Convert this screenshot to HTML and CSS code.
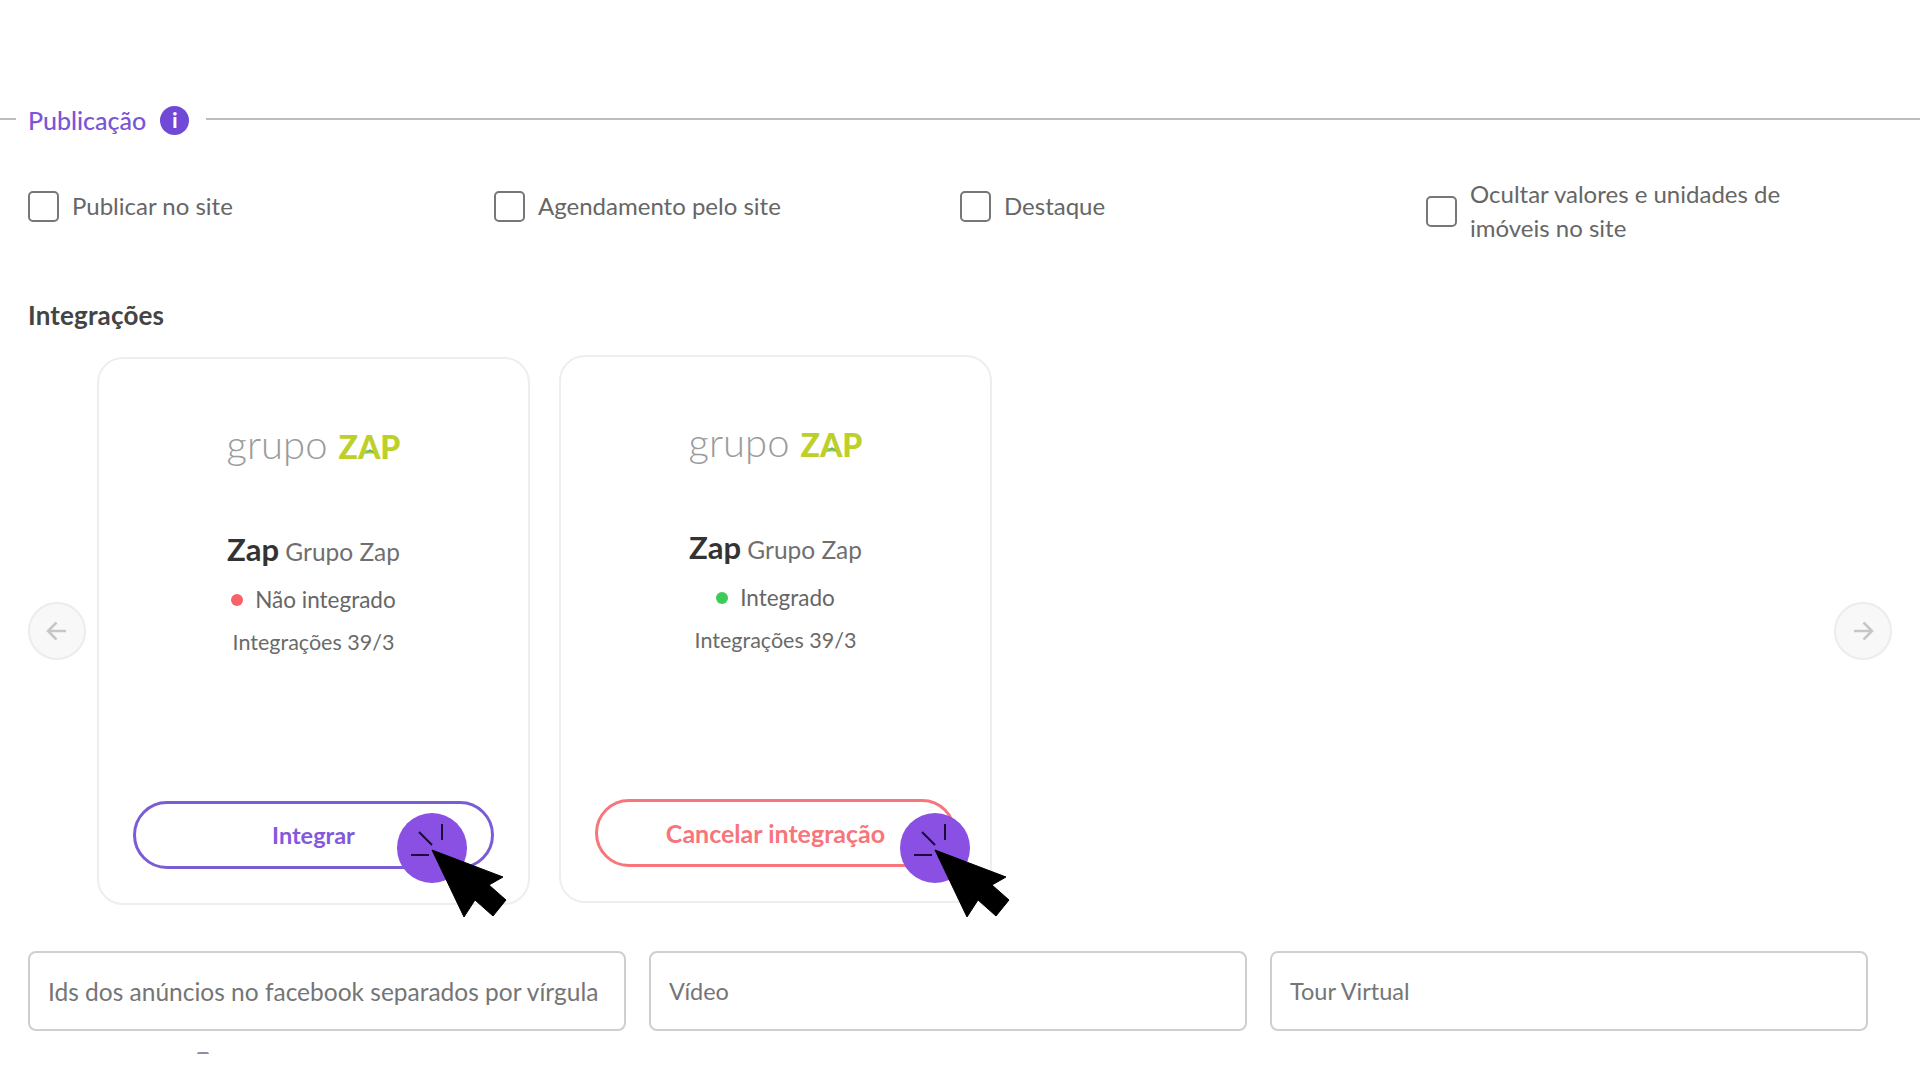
FILE: index.html
```html
<!DOCTYPE html>
<html lang="pt-BR">
<head>
<meta charset="utf-8">
<title>Publicação</title>
<link rel="stylesheet" href="styles.css">
</head>
<body>
<main class="page">
  <header class="legend">
    <span class="legend-stub"></span>
    <h2 class="legend-title">Publicação</h2>
    <span class="info-badge">i</span>
    <span class="legend-line"></span>
  </header>

  <section class="checks">
    <label class="check check-single"><span class="box"></span><span>Publicar no site</span></label>
    <label class="check check-single"><span class="box"></span><span>Agendamento pelo site</span></label>
    <label class="check check-single"><span class="box"></span><span>Destaque</span></label>
    <label class="check"><span class="box"></span><span class="check-wrap">Ocultar valores e unidades de imóveis no site</span></label>
  </section>

  <h3 class="section-title">Integrações</h3>

  <section class="carousel">
    <button class="arrow" aria-label="Anterior">
      <svg viewBox="0 0 24 24" class="arrow-icon"><path d="M21 12H3.500M11.500 3.500L3 12l8.500 8.500"/></svg>
    </button>
    <div class="cards">
      <article class="card">
        <div class="logo"><span class="logo-grupo">grupo</span><span class="logo-zap">ZAP<span class="logo-accent"></span></span></div>
        <p class="card-title"><strong>Zap</strong> Grupo Zap</p>
        <p class="status"><span class="dot dot-off"></span>Não integrado</p>
        <p class="count">Integrações 39/3</p>
        <div class="btn btn-purple">Integrar
          <svg class="pointer pointer-a" viewBox="0 0 115 115"><circle cx="36" cy="36" r="35" fill="#8a4fe3"/><path d="M23 20l13 13M46 12v16M15 43h18" stroke="#1c0a3a" stroke-width="2" fill="none"/><path d="M36 38l71 27-14 8 17 15-13 16-18-16-11 17z" fill="#000" stroke="#000" stroke-width="1" stroke-linejoin="round"/></svg>
        </div>
      </article>
      <article class="card card-raised">
        <div class="logo"><span class="logo-grupo">grupo</span><span class="logo-zap">ZAP<span class="logo-accent"></span></span></div>
        <p class="card-title"><strong>Zap</strong> Grupo Zap</p>
        <p class="status"><span class="dot dot-on"></span>Integrado</p>
        <p class="count">Integrações 39/3</p>
        <div class="btn btn-red">Cancelar integração
          <svg class="pointer pointer-b" viewBox="0 0 115 115"><circle cx="36" cy="36" r="35" fill="#8a4fe3"/><path d="M23 20l13 13M46 12v16M15 43h18" stroke="#1c0a3a" stroke-width="2" fill="none"/><path d="M36 38l71 27-14 8 17 15-13 16-18-16-11 17z" fill="#000" stroke="#000" stroke-width="1" stroke-linejoin="round"/></svg>
        </div>
      </article>
    </div>
    <button class="arrow" aria-label="Próximo">
      <svg viewBox="0 0 24 24" class="arrow-icon"><path d="M3 12h17.500M12.500 3.500L21 12l-8.500 8.500"/></svg>
    </button>
  </section>

  <section class="fields">
    <div class="field field-long">Ids dos anúncios no facebook separados por vírgula</div>
    <div class="field">Vídeo</div>
    <div class="field">Tour Virtual</div>
  </section>
  <span class="clipped-mark"></span>
</main>
</body>
</html>
```
FILE: styles.css
```css
* { box-sizing: border-box; }
html, body { margin: 0; background: #fff; }
body { font-family: Lato, "Open Sans", sans-serif; color: #666; }
p, h2, h3 { margin: 0; font-weight: 400; }

.page { height: 1080px; overflow: hidden; padding-top: 100px; }

.legend { display: flex; align-items: center; height: 40px; }
.legend-stub { width: 16px; height: 2px; background: #bdbdbd; margin-top: -3px; }
.legend-title { margin-left: 12px; font-size: 25px; font-weight: 500; color: #7a55d8; }
.info-badge { margin-left: 14px; width: 29px; height: 29px; border-radius: 50%; background: #7049d6; color: #fff; font-size: 20px; font-weight: 900; display: flex; align-items: center; justify-content: center; }
.legend-line { flex: 1; margin-left: 17px; height: 2px; background: #bdbdbd; margin-top: -3px; }

.checks { display: grid; grid-template-columns: repeat(4, 466px); padding-left: 28px; margin-top: 37px; align-items: start; font-size: 24px; line-height: 34px; }
.check { display: flex; align-items: center; gap: 13px; }
.check-single { margin-top: 12px; }
.check-wrap { width: 330px; }
.box { flex: none; width: 31px; height: 31px; border: 2px solid #777; border-radius: 5px; background: #fff; }

.section-title { margin: 53px 0 0 28px; font-size: 26px; line-height: 34px; font-weight: 700; color: #444; letter-spacing: .15px; }

.carousel { display: flex; align-items: center; padding: 0 28px; margin-top: 25px; }
.arrow { flex: none; width: 58px; height: 58px; border-radius: 50%; border: 2px solid #ececec; background: #f8f8f8; padding: 0; display: flex; align-items: center; justify-content: center; }
.arrow-icon { width: 24px; height: 24px; fill: none; stroke: #c6c6c6; stroke-width: 2.500; }
.cards { flex: 1; display: flex; gap: 29px; padding-left: 11px; }

.card { width: 433px; height: 548px; border: 2px solid #eee; border-radius: 26px; background: #fff; display: flex; flex-direction: column; align-items: center; padding: 65px 34px 34px; }
.card-raised { transform: translateY(-2px); }

.logo { display: flex; align-items: baseline; gap: 11px; height: 44px; }
.logo-grupo { font-size: 40px; font-weight: 300; color: #9b9b9b; line-height: 40px; }
.logo-zap { position: relative; font-size: 32px; font-weight: 900; color: #bdd02a; line-height: 40px; }
.logo-accent { position: absolute; left: 26px; top: 22px; width: 11px; height: 5px; background: #4fb89a; clip-path: polygon(50% 0, 100% 100%, 50% 50%, 0 100%); }

.card-title { margin-top: 61px; font-size: 24.500px; line-height: 40px; color: #6f6f6f; white-space: nowrap; }
.card-title strong { font-size: 31px; font-weight: 700; color: #333; }

.status { margin-top: 12px; display: flex; align-items: center; gap: 12px; font-size: 22.500px; line-height: 32px; }
.dot { width: 12px; height: 12px; border-radius: 50%; }
.dot-off { background: #f7626a; }
.dot-on { background: #3ecb5a; }
.count { margin-top: 10px; font-size: 21.500px; line-height: 32px; color: #6a6a6a; }

.btn { position: relative; margin-top: auto; width: 361px; height: 68px; flex: none; border-radius: 34px; border: 3px solid; background: #fff; display: flex; align-items: center; justify-content: center; font-weight: 700; }
.btn-purple { border-color: #7b5bd6; color: #8458dc; font-size: 23.500px; }
.btn-red { border-color: #f7757b; color: #f7757b; font-size: 25px; }

.pointer { position: absolute; width: 115px; height: 115px; }
.pointer-a { left: 260px; top: 8px; }
.pointer-b { left: 301px; top: 10px; }

.fields { display: grid; grid-template-columns: repeat(3, 598px); gap: 23px; padding-left: 28px; margin-top: 46px; }
.field { height: 80px; border: 2px solid #cfcfcf; border-radius: 8px; padding: 0 18px; display: flex; align-items: center; font-size: 23.500px; color: #757575; white-space: nowrap; }
.field-long { font-size: 24.500px; }

.clipped-mark { display: block; width: 12px; height: 2px; margin: 21px 0 0 197px; background: #8d8da8; border-radius: 2px 2px 0 0; }
```
